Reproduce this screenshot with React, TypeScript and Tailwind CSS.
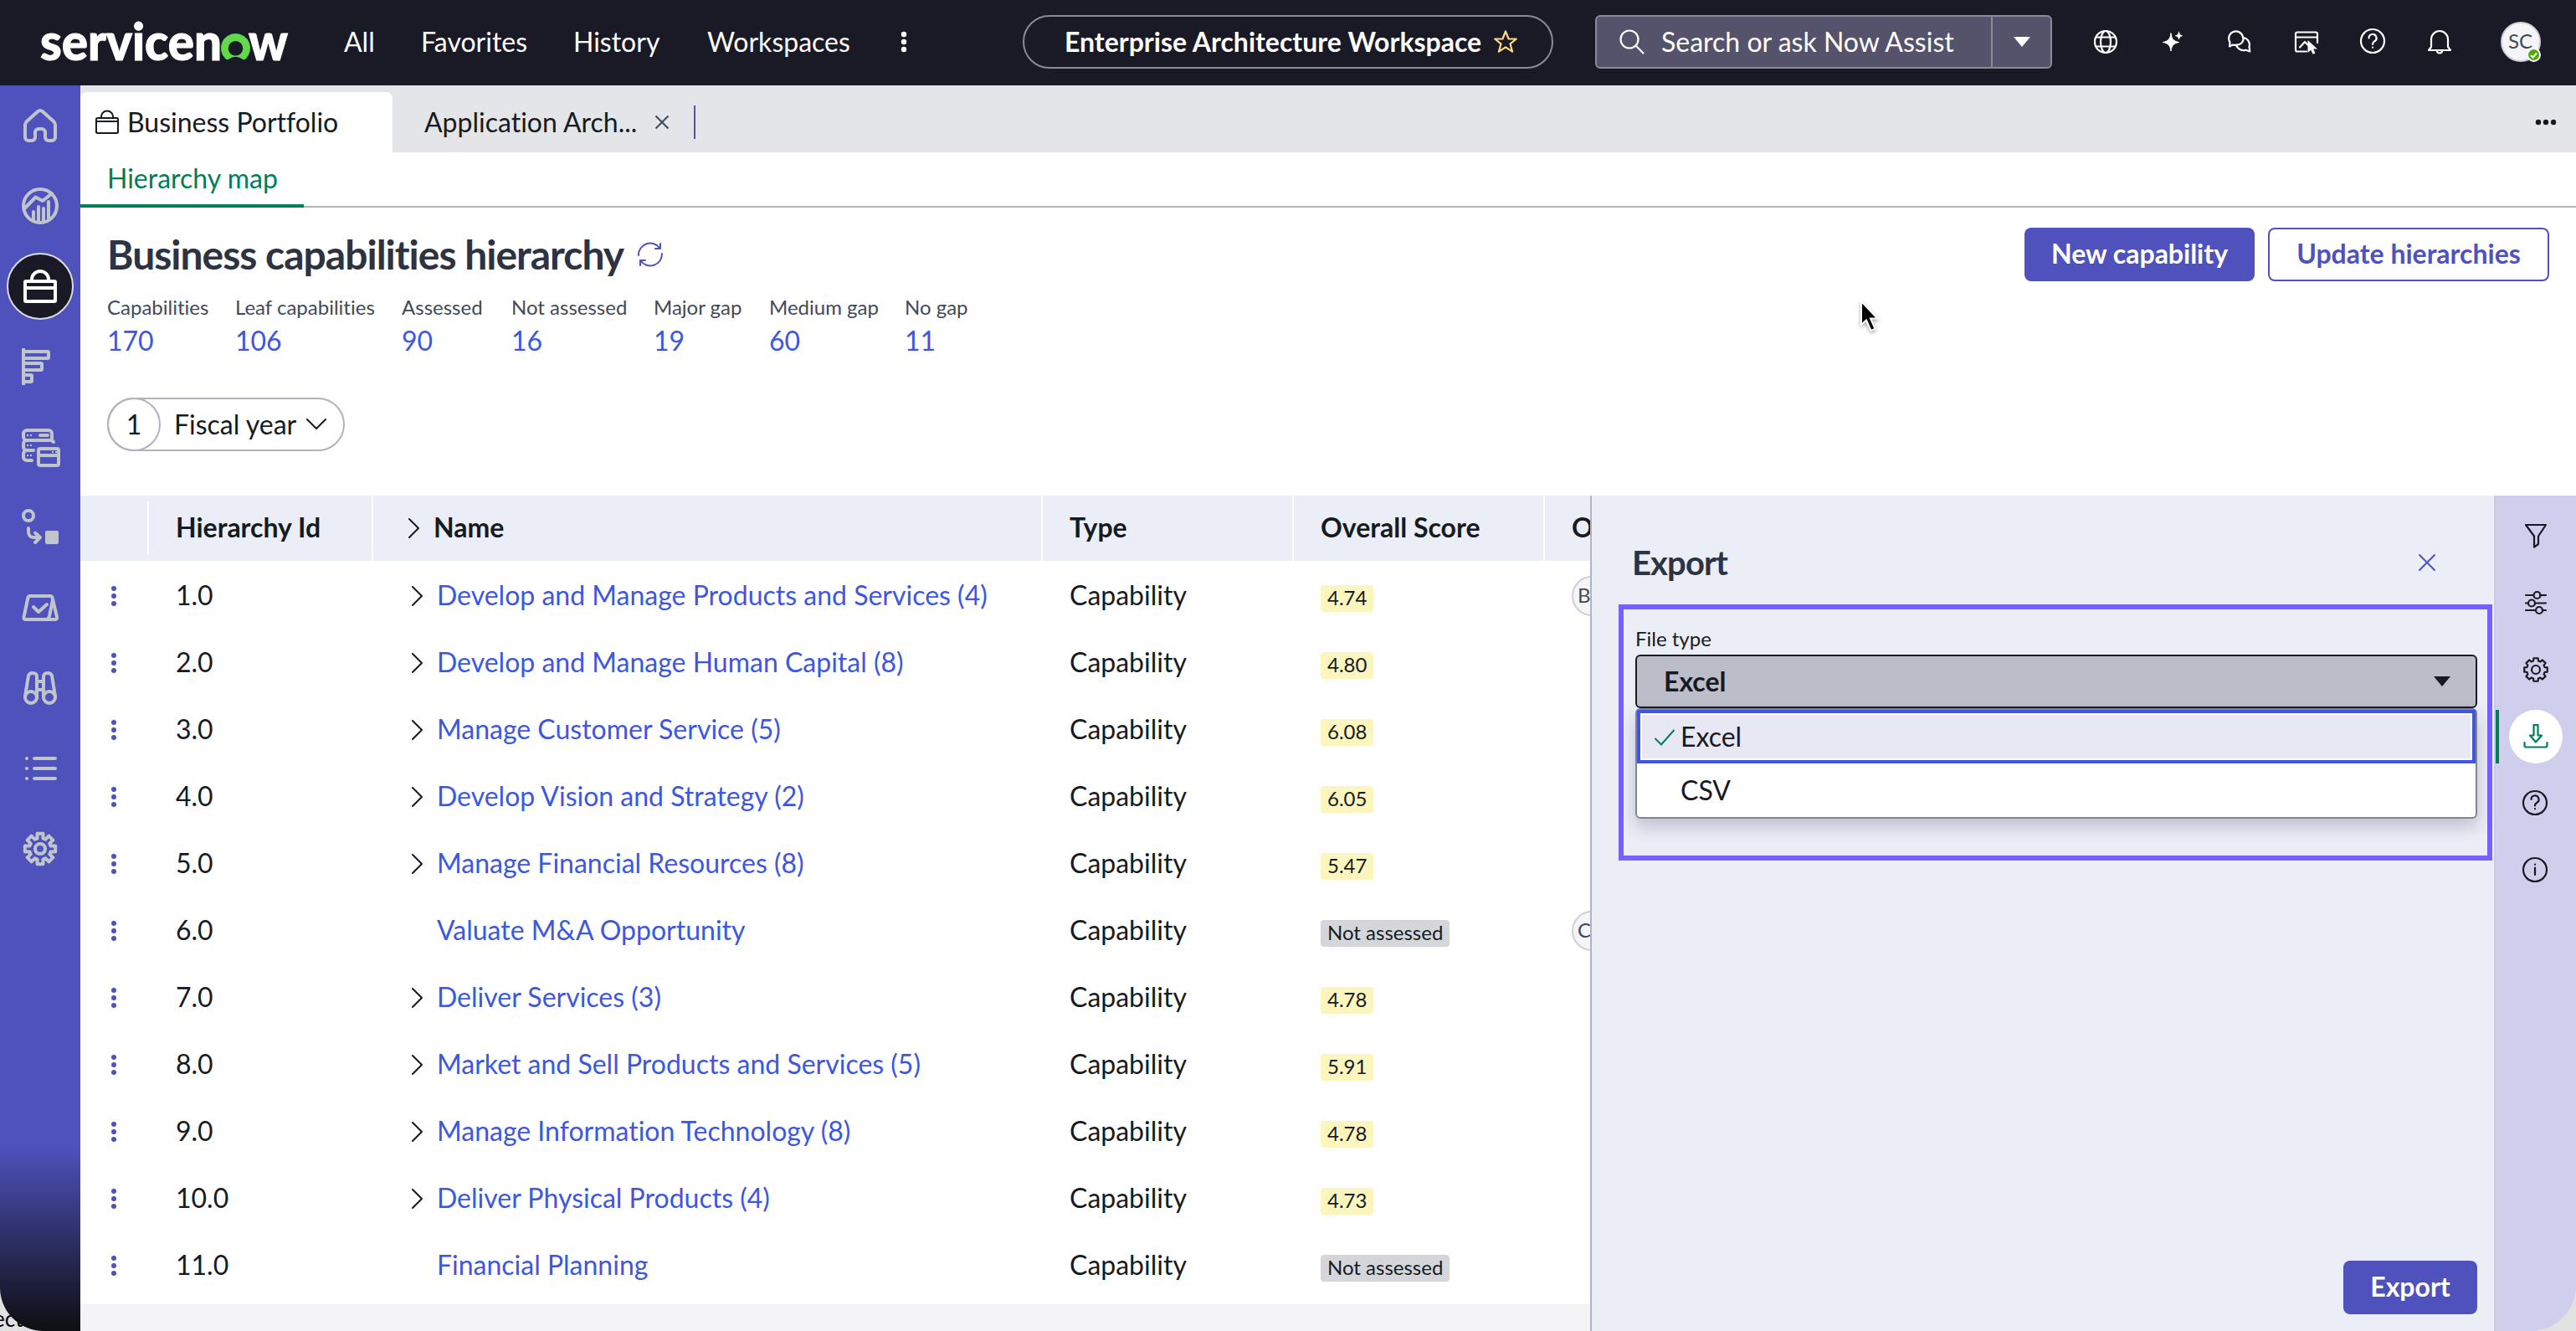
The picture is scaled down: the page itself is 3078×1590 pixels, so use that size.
import React from "react";
import clsx from "clsx";

void React;

interface IconProps {
  size?: number;
  stroke?: number;
  className?: string;
  children: React.ReactNode;
}

function Icon({ size = 48, stroke = 4, className = "", children }: IconProps) {
  return (
    <svg
      width={size}
      height={size}
      viewBox={`0 0 ${size} ${size}`}
      fill="none"
      stroke="currentColor"
      strokeWidth={stroke}
      strokeLinecap="round"
      strokeLinejoin="round"
      className={clsx("block shrink-0", className)}
      aria-hidden="true"
    >
      {children}
    </svg>
  );
}

// Closed gear outline with eight teeth
function gearPath(c: number, outer: number, inner: number) {
  const pts: string[] = [];
  for (let i = 0; i < 8; i++) {
    const a = (i * Math.PI) / 4;
    const steps: [number, number][] = [
      [inner, -0.27],
      [outer, -0.19],
      [outer, 0.19],
      [inner, 0.27],
    ];
    steps.forEach(([r, d]) => {
      pts.push(`${(c + r * Math.sin(a + d)).toFixed(2)} ${(c - r * Math.cos(a + d)).toFixed(2)}`);
    });
  }
  return `M${pts.join("L")}Z`;
}

const railIcons = [
  {
    name: "Home",
    art: (
      <path d="M24 6c1 0 2 .4 3 1.2L40 19c1.3 1.2 2 2.8 2 4.5V38a4 4 0 0 1-4 4h-4a4 4 0 0 1-4-4v-6a4 4 0 0 0-4-4h-4a4 4 0 0 0-4 4v6a4 4 0 0 1-4 4h-4a4 4 0 0 1-4-4V23.5c0-1.7.7-3.3 2-4.5L21 7.2c1-.8 2-1.2 3-1.2z" />
    ),
  },
  {
    name: "Analytics",
    art: (
      <>
        <circle cx="24" cy="24" r="20" />
        <path d="M5.5 27 18.5 13.5 27 18 38 9M16 31v10M22 25v18M28 27v16M34 19v21" />
      </>
    ),
  },
  {
    name: "Portfolio",
    active: true,
    art: (
      <>
        <rect x="6" y="18" width="36" height="24" rx="1" />
        <path d="M6 26h36M14 18v-2a10 10 0 0 1 20 0v2" strokeLinecap="butt" />
      </>
    ),
  },
  {
    name: "Roadmap",
    art: (
      <>
        <path d="M4 2v44" strokeLinecap="butt" />
        <rect x="4" y="6" width="30" height="8" rx="1" />
        <rect x="4" y="20" width="22" height="8" rx="1" />
        <rect x="4" y="34" width="10" height="8" rx="1" />
      </>
    ),
  },
  {
    name: "Inventory",
    art: (
      <>
        <path d="M8 4h26a4 4 0 0 1 4 4v8H8a4 4 0 0 1-4-4V8a4 4 0 0 1 4-4zM38 16l2 2M8 16a4 4 0 0 0-4 4v4a4 4 0 0 0 4 4h8M8 28a4 4 0 0 0-4 4v4a4 4 0 0 0 4 4h6" />
        <path d="M8 10h2M12 10h2M8 22h2M12 22h2M8 34h2M12 34h2M42 30h2M38 30h2" strokeWidth="2" strokeLinecap="butt" />
        <path d="M24 10h9" />
        <rect x="22" y="26" width="24" height="20" rx="2" />
        <path d="M22 34h24" />
      </>
    ),
  },
  {
    name: "Flow",
    art: (
      <>
        <circle cx="10" cy="10" r="6" />
        <path d="M10 25v4c0 4 2 7 6 7h8M18 30.5l6 5.5-6 6" />
        <rect x="30" y="28" width="16" height="16" rx="2" fill="currentColor" stroke="none" />
      </>
    ),
  },
  {
    name: "Assessments",
    art: (
      <>
        <path d="M12 10h24c1.5 0 2.3.8 2.6 2.2L44 35c.4 1.8-.5 3-2.5 3H7c-2 0-3-1.2-2.5-3L9.4 12.2C9.7 10.800 10.6 10 12 10zM39 15l-4 19c-.5 2-1 3.5-3 4" />
        <path d="M16 23l6 6 10-9" />
      </>
    ),
  },
  {
    name: "Explore",
    art: (
      <>
        <circle cx="13" cy="35" r="7" />
        <circle cx="35" cy="35" r="7" />
        <path d="M6 34l4-25a5 5 0 0 1 5-3c3 0 5 1.5 5 4v25M42 34L38 9a5 5 0 0 0-5-3c-3 0-5 1.5-5 4v25M20 16h8M20 26h8" />
      </>
    ),
  },
  {
    name: "Lists",
    art: <path d="M8 12h.01M8 24h.01M8 36h.01M17 12h25M17 24h25M17 36h25" />,
  },
  {
    name: "Settings",
    art: (
      <>
        <path d={gearPath(24, 18.5, 13)} />
        <circle cx="24" cy="24" r="6" />
      </>
    ),
  },
];

const stats = [
  ["Capabilities", "170"],
  ["Leaf capabilities", "106"],
  ["Assessed", "90"],
  ["Not assessed", "16"],
  ["Major gap", "19"],
  ["Medium gap", "60"],
  ["No gap", "11"],
];

interface CapabilityRow {
  id: string;
  name: string;
  score?: string;
  owner?: string;
}

const capabilities: CapabilityRow[] = [
  { id: "1.0", name: "Develop and Manage Products and Services (4)", score: "4.74", owner: "BL" },
  { id: "2.0", name: "Develop and Manage Human Capital (8)", score: "4.80" },
  { id: "3.0", name: "Manage Customer Service (5)", score: "6.08" },
  { id: "4.0", name: "Develop Vision and Strategy (2)", score: "6.05" },
  { id: "5.0", name: "Manage Financial Resources (8)", score: "5.47" },
  { id: "6.0", name: "Valuate M&A Opportunity", owner: "CB" },
  { id: "7.0", name: "Deliver Services (3)", score: "4.78" },
  { id: "8.0", name: "Market and Sell Products and Services (5)", score: "5.91" },
  { id: "9.0", name: "Manage Information Technology (8)", score: "4.78" },
  { id: "10.0", name: "Deliver Physical Products (4)", score: "4.73" },
  { id: "11.0", name: "Financial Planning" },
];

function Logo() {
  return (
    <svg width="300" height="90" viewBox="0 -15 300 90" className="block shrink-0" role="img" aria-label="servicenow">
      <g fill="#ffffff" stroke="#ffffff" strokeWidth="1" fontFamily="Lato, sans-serif" fontWeight="900" fontSize="60">
        <text x="0" y="52" textLength="217" lengthAdjust="spacingAndGlyphs">servicen</text>
        <text x="249" y="52" textLength="47" lengthAdjust="spacingAndGlyphs">w</text>
      </g>
      <path
        d="M233.5 20a17.500 17.500 0 0 0-12.100 30.200c1.200 1.200 3 1.300 4.300.3a12.500 12.500 0 0 1 15.600 0c1.300 1 3.100.9 4.300-.3A17.500 17.500 0 0 0 233.5 20zm0 26.500a8.800 8.800 0 1 1 0-17.600 8.800 8.800 0 0 1 0 17.600z"
        fill="#62d84e"
      />
    </svg>
  );
}

function Chevron({ className = "" }: { className?: string }) {
  return (
    <svg width="14" height="24" viewBox="0 0 14 24" fill="none" stroke="#161b22" strokeWidth="2" className={clsx("block shrink-0", className)}>
      <path d="M1 1l11 11L1 23" strokeLinecap="round" strokeLinejoin="round" />
    </svg>
  );
}

function TopBar() {
  return (
    <header className="flex h-[102px] w-full shrink-0 items-start bg-[#1a1926] pt-[18px] text-[32px] text-white">
      <div className="flex h-16 w-[411px] items-center pl-12">
        <Logo />
      </div>
      <nav className="flex h-16 items-center">
        <span className="w-[92px]">All</span>
        <span className="w-[182px]">Favorites</span>
        <span className="w-[160px]">History</span>
        <span className="w-[228px]">Workspaces</span>
      </nav>
      <div className="flex h-16 w-[149px] items-center">
        <svg width="14" height="28" viewBox="0 0 14 28" fill="#ffffff">
          <circle cx="7" cy="5" r="3.2" />
          <circle cx="7" cy="14" r="3.2" />
          <circle cx="7" cy="23" r="3.2" />
        </svg>
      </div>
      <div className="flex h-16 w-[634px] items-center rounded-full border-2 border-[#8b8a99] pl-12">
        <span className="font-bold">Enterprise Architecture Workspace</span>
        <svg width="30" height="30" viewBox="0 0 30 30" fill="none" stroke="#ffd782" strokeWidth="2.2" strokeLinejoin="round" className="ml-[14px]">
          <path d="M15 2.5l3.600 9h9.200l-7.300 5.800 2.600 9.400L15 21.400l-8.100 5.300 2.600-9.400-7.300-5.800h9.200z" />
        </svg>
      </div>
      <div className="ml-[50px] flex h-16 w-[546px] items-stretch rounded-[6px] border-2 border-[#8b8a99] bg-[#55536b]">
        <div className="flex flex-1 items-center pl-[26px]">
          <Icon size={32} stroke={2.2}>
            <circle cx="13" cy="13" r="10.5" />
            <path d="M21 21l8.5 8.5" />
          </Icon>
          <span className="ml-[19px]">Search or ask Now Assist</span>
        </div>
        <div className="flex w-[71px] items-center justify-center border-l-2 border-[#8b8a99]">
          <svg width="20" height="12" viewBox="0 0 20 12" fill="#ffffff">
            <path d="M0 0h20L10 12z" />
          </svg>
        </div>
      </div>
      <div className="ml-12 flex h-16 items-center">
        <Icon size={32} stroke={2.2} className="mr-[49px]">
          <circle cx="16" cy="16" r="13" />
          <ellipse cx="16" cy="16" rx="6" ry="13" />
          <path d="M4.5 10.5h23M4.5 21.5h23" />
        </Icon>
        <Icon size={32} stroke={1} className="mr-[47px]">
          <path d="M13 6c1 7 3 9 9.5 10.5C16 18 14 20 13 27c-1-7-3-9-9.5-10.5C10 15 12 13 13 6zM22.5 4.500c.6 2.800 1.300 3.600 4 4.200-2.700.7-3.400 1.500-4 4.300-.6-2.800-1.300-3.600-4-4.300 2.700-.6 3.400-1.400 4-4.200z" fill="currentColor" />
        </Icon>
        <Icon size={32} stroke={2.2} className="mr-[48px]">
          <path d="M20 10.5A8.5 8.5 0 1 0 4.500 16.500L4 21.500l4-2c1 .4 2.500.5 3.500.4" />
          <path d="M20.5 11A8.5 8.5 0 0 1 27.5 22l.8 5.5-4.800-1.800A9 9 0 0 1 12 19.500c6 .5 9-4 8.500-8.500z" />
        </Icon>
        <Icon size={32} stroke={2.2} className="mr-[46px]">
          <path d="M16 27.5H5a2 2 0 0 1-2-2V6.500a2 2 0 0 1 2-2h22a2 2 0 0 1 2 2V17M3 10.500h26M8 22.500l6-6.500 4 4" />
          <path d="M17.5 14v15l3.600-3.200 2.600 5 2.800-1.400-2.400-4.800h4.800z" fill="currentColor" stroke="none" />
        </Icon>
        <Icon size={34} stroke={2.2} className="mr-[46px]">
          <circle cx="17" cy="16" r="14" />
          <path d="M12.5 12.5a4.500 4.500 0 1 1 6.800 3.800c-1.600 1-2.300 1.700-2.300 3.700M17 23.500v.2" />
        </Icon>
        <Icon size={34} stroke={2.2} className="mr-[56px]">
          <path d="M17 4a10 10 0 0 0-10 10v9l-3 4h26l-3-4v-9A10 10 0 0 0 17 4zM14 27.500c0 4 6 4 6 0" />
        </Icon>
        <div className="relative flex size-12 items-center justify-center rounded-full border-2 border-[#cfd1da] bg-[#f5f5f8] text-[24px] text-[#3f4a59]">
          <span className="-ml-px pb-0.5">SC</span>
          <div className="absolute -bottom-0.5 -right-0.5 flex size-[17px] items-center justify-center rounded-full border-2 border-white bg-[#4ca80b]">
            <svg width="9" height="8" viewBox="0 0 9 8" fill="none" stroke="#ffffff" strokeWidth="2">
              <path d="M1 4l2.5 2.5L8 1.5" />
            </svg>
          </div>
        </div>
      </div>
    </header>
  );
}

function SideRail() {
  return (
    <aside className="flex w-24 shrink-0 flex-col items-center rounded-bl-[52px] bg-[linear-gradient(180deg,#4f52bd_0,#4f52bd_1265px,#101017_1480px)] text-[#c0c4cb]">
      {railIcons.map((icon) => (
        <div key={icon.name} className="flex h-24 w-full shrink-0 items-center justify-center">
          <div
            className={clsx(
              "flex size-20 items-center justify-center rounded-full",
              icon.active && "border-2 border-[#dcdce4] bg-[#1a1926] text-white",
            )}
          >
            <Icon>{icon.art}</Icon>
          </div>
        </div>
      ))}
    </aside>
  );
}

function TabStrip() {
  return (
    <div className="flex h-20 shrink-0 items-end bg-[#e4e5e9] text-[32px]">
      <div className="flex h-[72px] w-[373px] items-center rounded-t-[8px] bg-white pl-[17px]">
        <Icon size={30} stroke={2}>
          <rect x="2" y="10" width="26" height="18" rx="1.5" />
          <path d="M2 14h26M8 10V8a7 6.500 0 0 1 14 0v2" />
        </Icon>
        <span className="ml-[9px]">Business Portfolio</span>
      </div>
      <div className="flex h-[72px] flex-1 items-center pl-[38px]">
        <span className="w-[275px]">Application Arch...</span>
        <svg width="18" height="18" viewBox="0 0 18 18" stroke="#3f4a59" strokeWidth="2">
          <path d="M1.5 1.5l15 15M16.5 1.5l-15 15" />
        </svg>
        <div className="ml-[29px] h-10 w-0.5 bg-[#4f52bd]" />
        <svg width="26" height="8" viewBox="0 0 26 8" fill="#161b22" className="ml-auto mr-[23px]">
          <circle cx="4" cy="4" r="3.2" />
          <circle cx="13" cy="4" r="3.2" />
          <circle cx="22" cy="4" r="3.2" />
        </svg>
      </div>
    </div>
  );
}

function PageHeader() {
  return (
    <div className="flex h-[344px] shrink-0 justify-between px-8 pt-6">
      <div>
        <div className="flex h-16 items-center">
          <h1 className="pb-px text-[48px] font-bold leading-none tracking-[-1px] text-[#2d3342]">Business capabilities hierarchy</h1>
          <svg width="32" height="32" viewBox="0 0 32 32" fill="none" stroke="#4f52bd" strokeWidth="2" strokeLinecap="round" strokeLinejoin="round" className="ml-4">
            <path d="M2 17A14 14 0 0 1 27.5 8.500M30 15A14 14 0 0 1 4.500 23.500M28 3v6h-6M4 29v-6h6" />
          </svg>
        </div>
        <div className="mt-[13px] grid grid-cols-[153px_199px_131px_170px_138px_162px_auto]">
          {stats.map(([label, value]) => (
            <div key={label}>
              <div className="h-9 whitespace-nowrap text-[24px] leading-9 text-[#414a5a]">{label}</div>
              <div className="text-[32px] leading-[44px] text-[#3d57e0]">{value}</div>
            </div>
          ))}
        </div>
        <div className="mt-[46px] flex h-16 w-[284px] items-center rounded-full border-2 border-[#b0b3c0] text-[32px]">
          <div className="-ml-0.5 flex size-16 shrink-0 items-center justify-center rounded-full border-2 border-[#b0b3c0]">1</div>
          <span className="ml-4">Fiscal year</span>
          <svg width="26" height="16" viewBox="0 0 26 16" fill="none" stroke="#161b22" strokeWidth="2" strokeLinecap="round" className="ml-[11px]">
            <path d="M2 2l11 11L24 2" />
          </svg>
        </div>
      </div>
      <div className="flex gap-4 text-[32px] font-bold">
        <button className="h-16 w-[275px] rounded-[8px] bg-[#4f52bd] pb-px text-white">New capability</button>
        <button className="h-16 w-[336px] rounded-[8px] border-2 border-[#4f52bd] bg-white pb-px text-[#4f52bd]">Update hierarchies</button>
      </div>
    </div>
  );
}

function CapabilityTable() {
  return (
    <div className="flex w-[1804px] shrink-0 flex-col overflow-hidden bg-[#f4f4f7] text-[32px]">
      <div className="flex h-[78px] shrink-0 items-center bg-[#ebeef7] font-bold">
        <div className="h-16 w-[82px] shrink-0 border-r-2 border-white" />
        <div className="flex h-full w-[268px] shrink-0 items-center border-r-2 border-white pb-px pl-8">Hierarchy Id</div>
        <div className="flex h-full w-[800px] shrink-0 items-center border-r-2 border-white pl-[42px]">
          <Chevron />
          <span className="ml-4 pb-px">Name</span>
        </div>
        <div className="flex h-full w-[300px] shrink-0 items-center border-r-2 border-white pb-px pl-8">Type</div>
        <div className="flex h-full w-[300px] shrink-0 items-center border-r-2 border-white pb-px pl-8">Overall Score</div>
        <div className="flex h-full w-[300px] shrink-0 items-center pb-px pl-8">Owner</div>
      </div>
      <div className="bg-white pb-2">
        {capabilities.map((row) => (
          <div key={row.id} className="flex h-20 items-center">
            <div className="flex w-[82px] shrink-0 items-center pl-9 pt-1">
              <svg width="8" height="26" viewBox="0 0 8 26" fill="#4f52bd">
                <circle cx="4" cy="4" r="3" />
                <circle cx="4" cy="13" r="3" />
                <circle cx="4" cy="22" r="3" />
              </svg>
            </div>
            <div className="w-[268px] shrink-0 pl-8 pt-[3px]">{row.id}</div>
            <div className="flex w-[800px] shrink-0 items-center pl-[46px]">
              <div className="w-[30px] pt-1">{row.name.endsWith(")") && <Chevron />}</div>
              <a className="pt-[3px] text-[#3d57e0]">{row.name}</a>
            </div>
            <div className="w-[300px] shrink-0 pl-8 pt-[3px]">Capability</div>
            <div className="flex w-[300px] shrink-0 items-center pl-8 pt-[10px]">
              <span
                className={clsx(
                  "h-8 rounded-[4px] px-2 text-[24px] leading-[29px]",
                  row.score ? "bg-[#fcf6be]" : "bg-[#d5d6da]",
                )}
              >
                {row.score ?? "Not assessed"}
              </span>
            </div>
            <div className="w-[300px] shrink-0 pl-8 pt-1">
              {row.owner && (
                <div className="flex size-12 items-center rounded-full border-2 border-[#cfd1da] bg-[#f5f5f8] pb-0.5 pl-[5px] text-[24px] text-[#3f4a59]">
                  {row.owner}
                </div>
              )}
            </div>
          </div>
        ))}
      </div>
    </div>
  );
}

function ExportPanel() {
  return (
    <section className="flex w-[1080px] shrink-0 flex-col border-l-2 border-[#b0b3c0] bg-[#ebeef7]">
      <div className="flex h-[130px] items-center pl-12 pr-[69px] pt-[29px]">
        <h2 className="text-[40px] font-bold tracking-[-0.9px] text-[#2d3342]">Export</h2>
        <svg width="22" height="22" viewBox="0 0 22 22" stroke="#4f52bd" strokeWidth="2" strokeLinecap="round" className="ml-auto">
          <path d="M2 2l18 18M20 2L2 20" />
        </svg>
      </div>
      <div className="ml-8 mr-0.5 h-[306px] border-[6px] border-[#7661ff] pl-3.5 pr-3 pt-[19px]">
        <div className="h-[35px] text-[24px] leading-8">File type</div>
        <div className="flex h-16 items-center justify-between rounded-[6px] border-2 border-[#161b22] bg-[#bbbdc9] pl-8 pr-[30px]">
          <span className="text-[32px] font-bold">Excel</span>
          <svg width="20" height="12" viewBox="0 0 20 12" fill="#161b22">
            <path d="M0 0h20L10 12z" />
          </svg>
        </div>
        <div className="h-[132px] rounded-[6px] border-2 border-[#81858f] bg-white text-[32px] shadow-[0_10px_20px_rgba(30,30,60,0.22)]">
          <div className="flex h-16 items-center border-4 border-[#3d57e0] bg-white p-0.5">
            <div className="flex h-full flex-1 items-center bg-[#e8e8f5] pl-[14px]">
              <svg width="26" height="20" viewBox="0 0 26 20" fill="none" stroke="#007e59" strokeWidth="2" strokeLinecap="round" className="mt-0.5">
                <path d="M2 11.5l7 7L24 1.5" />
              </svg>
              <span className="ml-[6px]">Excel</span>
            </div>
          </div>
          <div className="flex h-16 items-center pl-[52px]">CSV</div>
        </div>
      </div>
      <div className="mt-auto flex justify-end pb-5 pr-5">
        <button className="h-16 w-40 rounded-[8px] bg-[#4f52bd] pb-px text-[32px] font-bold text-white">Export</button>
      </div>
    </section>
  );
}

const toolIcons = [
  {
    name: "Filter",
    art: <path d="M5 4h24l-9 13.5V27l-5 3.500V17.500z" />,
  },
  {
    name: "Personalize",
    art: (
      <>
        <path d="M5 8h9M22 8h7M5 17.5h3M16 17.5h13M5 26h11M25 26h4" />
        <circle cx="18.5" cy="8" r="4" />
        <circle cx="12" cy="17.5" r="4" />
        <circle cx="21" cy="26" r="4" />
      </>
    ),
  },
  {
    name: "Configure",
    art: (
      <>
        <path d={gearPath(17, 14, 11)} />
        <circle cx="17" cy="17" r="5" />
      </>
    ),
  },
  {
    name: "Export",
    active: true,
    art: (
      <path d="M14.5 3h5v12.500h4.500L17 23.500 10 15.500h4.500zM3.500 24v3.500a2 2 0 0 0 2 2h23a2 2 0 0 0 2-2V24" />
    ),
  },
  {
    name: "Help",
    art: (
      <>
        <circle cx="16" cy="16" r="14" />
        <path d="M11.5 12a4.500 4.500 0 1 1 6.800 3.800c-1.600 1-2.300 1.700-2.300 3.700M16 23v.2" />
      </>
    ),
  },
  {
    name: "Info",
    art: (
      <>
        <circle cx="16" cy="16" r="14" />
        <path d="M16 13.5V22M16 9.500v.2" />
      </>
    ),
  },
];

function ToolRail() {
  return (
    <aside className="flex w-[98px] shrink-0 flex-col rounded-br-[54px] border-l-2 border-[#c9ccda] bg-[#cfcfed] pt-2">
      {toolIcons.map((tool) => (
        <div key={tool.name} className="flex h-20 shrink-0 items-center">
          <div className={clsx("h-16 w-1", tool.active && "bg-[#007e59]")} />
          <div
            className={clsx(
              "ml-3 flex size-16 items-center justify-center rounded-full",
              tool.active && "bg-white text-[#007e59]",
            )}
          >
            <Icon size={34} stroke={2.2}>{tool.art}</Icon>
          </div>
        </div>
      ))}
    </aside>
  );
}

export default function App() {
  return (
    <div className="relative h-[1590px] w-[3078px] overflow-hidden bg-[#e2e2e2] font-['Lato','Open_Sans',sans-serif] leading-[1.2] text-[#161b22] [font-variant-ligatures:none]">
      <span className="absolute bottom-0 -left-2 text-[26px] leading-[30px] text-black">ect</span>
      <div className="relative flex h-full flex-col">
        <TopBar />
        <div className="flex flex-1">
          <SideRail />
          <main className="flex min-w-0 flex-1 flex-col">
            <TabStrip />
            <div className="flex h-[66px] shrink-0 border-b-2 border-[#b0b3c0] bg-white">
              <div className="flex h-[66px] w-[267px] items-center border-b-4 border-[#007e59] pl-8 pt-px text-[32px] text-[#007e59]">
                Hierarchy map
              </div>
            </div>
            <div className="flex flex-col bg-white">
              <PageHeader />
            </div>
            <div className="flex flex-1">
              <CapabilityTable />
              <ExportPanel />
              <ToolRail />
            </div>
          </main>
        </div>
      </div>
      <svg width="30" height="44" viewBox="0 0 30 44" className="absolute left-[2221px] top-[358px] drop-shadow-[0_2px_2px_rgba(0,0,0,0.35)]">
        <path d="M3 2v28l6-5.500 5.500 12.500 5-2.200L14 22.500h8.500z" fill="#000000" stroke="#ffffff" strokeWidth="2" />
      </svg>
    </div>
  );
}
